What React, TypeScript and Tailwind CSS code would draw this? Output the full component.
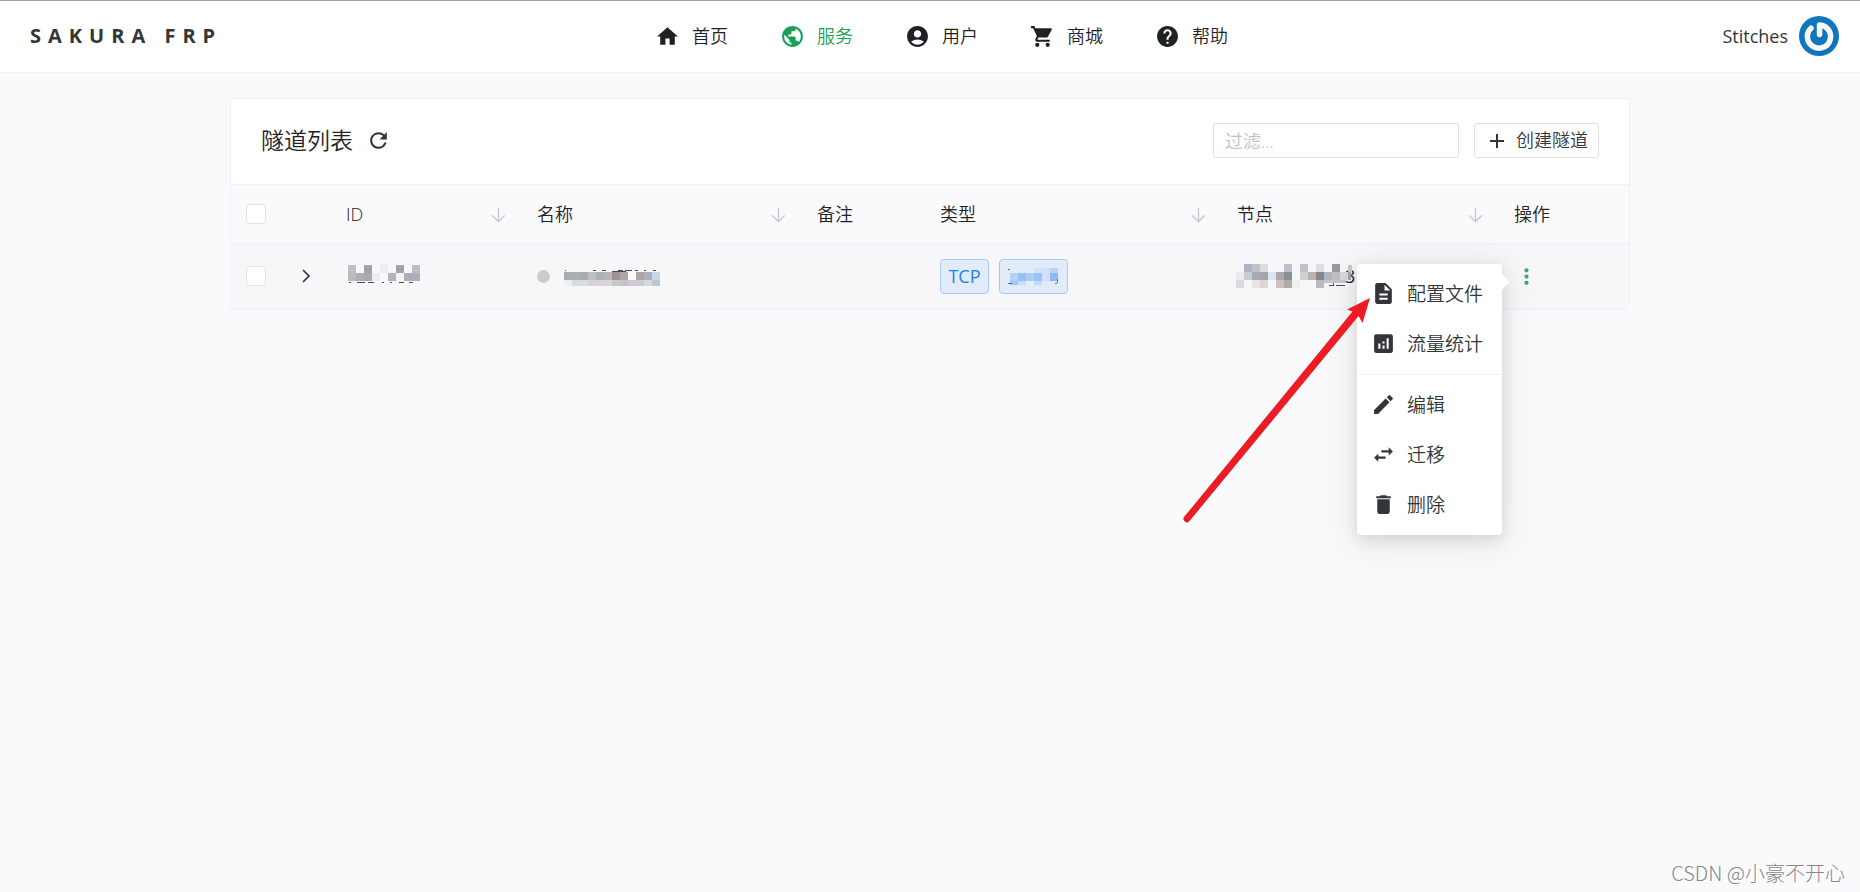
import React, { useState } from 'react';
import {
  MdAccountCircle,
  MdAdd,
  MdAnalytics,
  MdDelete,
  MdDescription,
  MdEdit,
  MdHelp,
  MdHome,
  MdMoreVert,
  MdPublic,
  MdRefresh,
  MdShoppingCart,
  MdSwapHoriz,
} from 'react-icons/md';
import type { IconType } from 'react-icons';

interface MenuEntry {
  label: string;
  icon: IconType;
}

interface Column {
  label: string;
  width: string;
  sortable?: boolean;
}

const NAV_ITEMS: MenuEntry[] = [
  { label: '首页', icon: MdHome },
  { label: '服务', icon: MdPublic },
  { label: '用户', icon: MdAccountCircle },
  { label: '商城', icon: MdShoppingCart },
  { label: '帮助', icon: MdHelp },
];

const COLUMNS: Column[] = [
  { label: 'ID', width: 'w-[191px]', sortable: true },
  { label: '名称', width: 'w-[280px]', sortable: true },
  { label: '备注', width: 'w-[123px]' },
  { label: '类型', width: 'w-[297px]', sortable: true },
  { label: '节点', width: 'w-[277px]', sortable: true },
  { label: '操作', width: 'w-[130px]' },
];

const MENU_GROUPS: MenuEntry[][] = [
  [
    { label: '配置文件', icon: MdDescription },
    { label: '流量统计', icon: MdAnalytics },
  ],
  [
    { label: '编辑', icon: MdEdit },
    { label: '迁移', icon: MdSwapHoriz },
    { label: '删除', icon: MdDelete },
  ],
];

// Masked values, one colour per 8px cell ('' leaves the cell empty)
const ID_MASK = [
  ['#bdc0c8', '', '#a3a2a8', '', '#eeecec', '', '#a3a2a8', '', '#bdbec4'],
  ['#bfbab9', '#aeaeb5', '#a8a9b4', '#eeeced', '', '#b3b4ba', '#f4f2f3', '#aeacb4', '#abafbd'],
];

const NAME_MASK = [
  ['#acabad', '#a9adb5', '#a9abae', '#bac1c7', '#adb0b4', '#b4b6bb', '#9f9392', '#ada6a4', '#fafafa', '#aea6a0', '#aeafb8', '#c6d5e8'],
  ['#e8f0fb', '#dadadd', '#dcdce0', '#d2d3d8', '#d4d4da', '#dcd5d3', '#cac8ca', '#c6c2c4', '#cccad6', '#cdccd6', '#d8d8db', '#c1c5ca'],
];

const PORT_MASK = [
  ['', '', '', '#d2e2f8', '#cfe0f9', '#bcd3f6'],
  ['#b5cff7', '#98c0f7', '#abccf5', '#98c3f7', '#d6def6', '#8dbaf6'],
  ['#9fc4f8', '#c7dbf7', '', '#c0d9f8', '', ''],
];

const NODE_MASK = [
  ['', '#adb4c4', '#bfc2c8', '#dcdce0', '', '', '#b9c2cb', '', '#bfc3c8', '', '#dedfe8', '', '#9a9b9f', ''],
  ['#ececee', '#c3cdd6', '#a7abb0', '#a8a5a8', '#dce6f2', '#ada8a9', '#868f9c', '', '#cfd0d3', '#bbb2ab', '#86878b', '#afb7be', '#c1bebc', '#d3d7e0'],
  ['#dadadd', '', '#e8e4e4', '#d8d7da', '', '#cfc2bb', '#b0aba7', '#f1f0f1', '', '', '#b9bbbe', '', '', ''],
];

interface MaskProps {
  cells: string[][];
  heights: number[];
  className?: string;
  children?: React.ReactNode;
}

const Mask: React.FC<MaskProps> = ({ cells, heights, className = '', children }) => {
  const total = heights.reduce((sum, h) => sum + h, 0);
  const width = cells[0].length * 8;

  return (
    <svg
      width={width}
      height={total}
      className={`shrink-0 overflow-visible ${className}`}
      shapeRendering="crispEdges"
    >
      {cells.map((row, r) => {
        const y = heights.slice(0, r).reduce((sum, h) => sum + h, 0);
        return row.map((color, c) =>
          color ? <rect key={`${r}-${c}`} x={c * 8} y={y} width={8} height={heights[r]} fill={color} /> : null
        );
      })}
      {children}
    </svg>
  );
};

const SortArrow: React.FC = () => (
  <svg width="17" height="18" viewBox="0 0 17 18" fill="none" stroke="#c2c2c8" strokeWidth="1.2">
    <path d="M8.500 2v13.500M2.300 9.500l6.200 6.200 6.200-6.200" />
  </svg>
);

const Avatar: React.FC = () => (
  <svg width="40" height="40" viewBox="0 0 40 40" fill="none">
    <circle cx="20" cy="20" r="20" fill="#0f77bd" />
    <g strokeLinecap="round" strokeWidth="5.6">
      <path d="M12 12.2a11.6 11.6 0 1 0 8.6-3.2v9.4" stroke="#0a5c96" strokeOpacity="0.45" transform="translate(0.8 1)" />
      <path d="M12 12.2a11.6 11.6 0 1 0 8.6-3.2v9.4" stroke="#f6f6f6" strokeLinejoin="round" />
    </g>
  </svg>
);

const Header: React.FC = () => {
  const [active, setActive] = useState('服务');

  return (
    <header className="flex h-[73px] items-center border-t border-b border-t-[#90a4ae] border-b-[#efeff5] bg-white pr-[21px] pb-px pl-[30px]">
      <div className="flex-1 text-[20px] font-bold tracking-[7px] text-[#333639]">SAKURA FRP</div>

      <nav className="flex gap-[52px] pl-[14px]">
        {NAV_ITEMS.map(({ label, icon: Icon }) => (
          <a
            key={label}
            href="#"
            onClick={() => setActive(label)}
            className={`flex items-center gap-3 text-[18px] ${
              active === label ? 'text-[#18a058]' : 'text-[#1f2225]'
            }`}
          >
            <Icon size={25} />
            {label}
          </a>
        ))}
      </nav>

      <div className="flex flex-1 items-center justify-end gap-[11px] text-[18px] font-normal text-[#333639]">
        Stitches
        <Avatar />
      </div>
    </header>
  );
};

const RowMenu: React.FC = () => (
  <div className="absolute top-0 right-full z-10 mr-3 w-[145px] rounded bg-white py-[5px] shadow-[0_4px_16px_rgba(0,0,0,0.12),0_8px_36px_8px_rgba(0,0,0,0.06)]">
    <div className="absolute top-[10px] left-full h-4 w-2 bg-white [clip-path:polygon(0_0,100%_50%,0_100%)]" />
    {MENU_GROUPS.map((group, i) => (
      <ul key={i} className={i > 0 ? 'mt-[5px] border-t border-[#efeff5] pt-[5px]' : ''}>
        {group.map(({ label, icon: Icon }) => (
          <li key={label}>
            <button className="flex h-[50px] w-full items-center gap-[11px] pl-[14px] text-[19px] whitespace-nowrap text-[#333639]">
              <Icon size={25} className="shrink-0" />
              {label}
            </button>
          </li>
        ))}
      </ul>
    ))}
    {/* Pointer to the first entry */}
    <svg
      width="187"
      height="225"
      viewBox="0 0 187 225"
      fill="#ed1c24"
      className="pointer-events-none absolute top-[34px] right-[132px]"
    >
      <path d="M187 0L179.500 25L175.500 18L6.300 223.300A3.400 3.400 0 0 1 1 219.100L169.500 13.500L164 11.500z" />
    </svg>
  </div>
);

const CheckBox: React.FC<{ label: string }> = ({ label }) => (
  <input
    type="checkbox"
    aria-label={label}
    className="block size-5 appearance-none rounded-sm border border-[#e0e0e6] bg-white checked:bg-[#18a058]"
  />
);

const TunnelTable: React.FC = () => (
  <table className="w-full table-fixed text-left text-[18px] text-[#1f2225]">
    <thead>
      <tr className="h-[58px] border-b border-[#efeff5] bg-[#fafafc]">
        <th className="w-[50px] pl-[15px]">
          <CheckBox label="全选" />
        </th>
        <th className="w-[50px]" />
        {COLUMNS.map(({ label, width, sortable }) => (
          <th key={label} className={`${width} px-[15px] pt-[2px]`}>
            <div className="flex items-center justify-between font-[350]">
              {label}
              {sortable && (
                <button aria-label={`按${label}排序`}>
                  <SortArrow />
                </button>
              )}
            </div>
          </th>
        ))}
      </tr>
    </thead>
    <tbody>
      <tr className="h-[66px] bg-[#f7f7fa]">
        <td className="pl-[15px]">
          <CheckBox label="选择" />
        </td>
        <td>
          <button aria-label="展开" className="flex w-full justify-center">
            <svg width="18" height="18" viewBox="0 0 18 18" fill="none" stroke="#333639" strokeWidth="1.7">
              <path d="M6 3l6 6-6 6" />
            </svg>
          </button>
        </td>
        <td className="px-[17px]">
          <Mask cells={ID_MASK} heights={[8, 8]} className="mb-[6px]">
            <path
              d="M1 17h2M9 17h8M20 17h6M34 17h2M42 17h2M51 17h5M61 17h4"
              stroke="#4a4a50"
              strokeWidth="1"
            />
          </Mask>
        </td>
        <td className="px-[15px]">
          <div className="flex items-center gap-[14px]">
            <span className="size-[13px] shrink-0 rounded-full bg-[#ccc]" />
            <Mask cells={NAME_MASK} heights={[8, 6]} className="mt-[6px]">
              <path
                d="M1 -2h1M29 -2h3M38 -2h4M48 -1h14M54 -2h5M61 -2h7M71 -2h3M80 -2h2M89 -2h3"
                stroke="#4a4a50"
                strokeWidth="1"
              />
            </Mask>
          </div>
        </td>
        <td />
        <td className="px-[15px]">
          <div className="flex gap-[10px] font-normal text-[#2080f0]">
            <span className="flex h-[35px] w-[49px] items-center justify-center rounded-sm border border-[#a6c9f7] bg-[#e1ebfa]">
              TCP
            </span>
            <span className="flex h-[35px] w-[69px] items-center justify-center rounded-sm border border-[#a6c9f7] bg-[#e1ebfa]">
              <Mask cells={PORT_MASK} heights={[5, 8, 4]}>
                <path d="M-2 2l2-1M-2 15h4M48 11l-1 4-2 1" stroke="#2080f0" strokeWidth="1" fill="none" />
              </Mask>
            </span>
          </div>
        </td>
        <td className="px-[14px]">
          <div className="relative flex items-center">
            <span className="absolute left-[109px] font-normal">3</span>
            <Mask cells={NODE_MASK} heights={[8, 8, 8]} className="relative">
              <rect x="112" y="1" width="4" height="7" fill="#cfcac8" />
              <rect x="112" y="8" width="3" height="8" fill="#a3a6b0" />
              <rect x="88" y="16" width="22" height="3" fill="#c8c8cb" />
              <path d="M93 21h4M97 19v3M100 21h9" stroke="#4a4a50" strokeWidth="1" />
            </Mask>
          </div>
        </td>
        <td className="px-[15px]">
          <div className="relative w-[25px]">
            <button aria-label="更多操作" className="flex text-[#36ad6a]">
              <MdMoreVert size={25} />
            </button>
            <RowMenu />
          </div>
        </td>
      </tr>
    </tbody>
  </table>
);

const App: React.FC = () => {
  const [filter, setFilter] = useState('');

  return (
    <div className="relative min-h-screen bg-[#fafafc] font-['Open_Sans','Noto_Sans_CJK_SC',sans-serif] font-[350]">
      <Header />

      <main className="px-6 pt-[25px]">
        <section className="mx-auto max-w-[1400px] rounded border border-[#efeff5] bg-white">
          <div className="flex h-[86px] items-center border-b border-[#efeff5] px-[30px] pb-[2px]">
            <h1 className="text-[23px] font-[350] text-[#1f2225]">隧道列表</h1>
            <button aria-label="刷新" className="ml-[13px] text-[#333639]">
              <MdRefresh size={25} />
            </button>
            <input
              type="text"
              aria-label="过滤"
              placeholder="过滤..."
              value={filter}
              onChange={(e) => setFilter(e.target.value)}
              className="ml-auto h-[35px] w-[246px] rounded-[3px] border border-[#e0e0e6] bg-white px-[11px] text-[18px] text-[#333639] outline-none placeholder:text-[#c2c2c2]"
            />
            <button className="ml-[15px] flex h-[35px] items-center gap-[7px] rounded-[3px] border border-[#e0e0e6] px-[10px] text-[18px] text-[#333639]">
              <MdAdd size={24} />
              创建隧道
            </button>
          </div>
          <TunnelTable />
        </section>
      </main>

      <div className="absolute right-[15px] bottom-[6px] font-['Noto_Sans_CJK_SC',sans-serif] text-[20px] leading-[26px] font-light text-[#85858a] [text-shadow:1px_1px_0_#fff]">
        CSDN @小豪不开心
      </div>
    </div>
  );
};

export default App;
